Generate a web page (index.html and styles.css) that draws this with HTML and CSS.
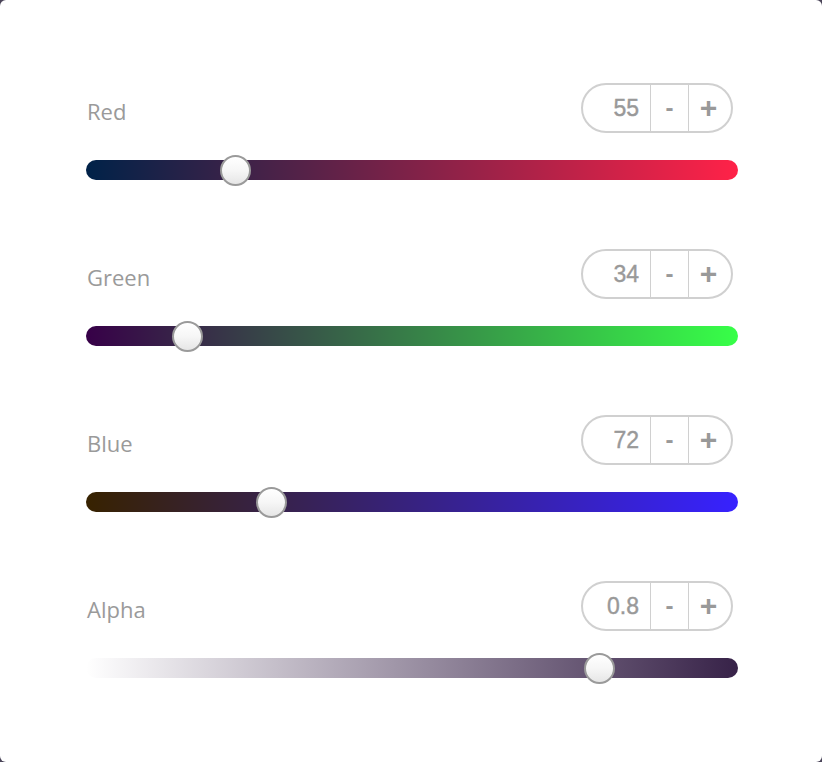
FILE: index.html
```html
<!DOCTYPE html>
<html>
<head>
<meta charset="utf-8">
<link rel="stylesheet" href="styles.css">
</head>
<body>
<div class="card">
  <div class="row">
    <div class="head">
      <span class="label">Red</span>
      <div class="stepper"><span class="val">55</span><span class="btn minus">-</span><span class="btn plus">+</span></div>
    </div>
    <div class="track red"><span class="thumb" style="left:149px"></span></div>
  </div>
  <div class="row">
    <div class="head">
      <span class="label">Green</span>
      <div class="stepper"><span class="val">34</span><span class="btn minus">-</span><span class="btn plus">+</span></div>
    </div>
    <div class="track green"><span class="thumb" style="left:101px"></span></div>
  </div>
  <div class="row">
    <div class="head">
      <span class="label">Blue</span>
      <div class="stepper"><span class="val">72</span><span class="btn minus">-</span><span class="btn plus">+</span></div>
    </div>
    <div class="track blue"><span class="thumb" style="left:185px"></span></div>
  </div>
  <div class="row">
    <div class="head">
      <span class="label">Alpha</span>
      <div class="stepper"><span class="val">0.8</span><span class="btn minus">-</span><span class="btn plus">+</span></div>
    </div>
    <div class="track alpha"><span class="thumb" style="left:513px"></span></div>
  </div>
</div>
</body>
</html>
```
FILE: styles.css
```css
html { background: #4a4458; }
body { margin: 0; }
.card {
  width: 822px;
  height: 762px;
  box-sizing: border-box;
  background: #fff;
  border-radius: 6px;
  padding: 83px 84px 0 86px;
  display: flex;
  flex-direction: column;
  gap: 69px;
}
.row { display: flex; flex-direction: column; gap: 27px; }
.head {
  display: flex;
  justify-content: space-between;
  align-items: center;
  padding-right: 5px;
}
.label {
  font-family: "Open Sans", sans-serif;
  font-size: 22px;
  color: #9a9a9a;
  padding-top: 6px;
  padding-left: 1px;
}
.stepper {
  display: flex;
  height: 50px;
  width: 152px;
  box-sizing: border-box;
  border: 2px solid #d0d0d0;
  border-radius: 25px;
  font-family: "Liberation Sans", Arial, sans-serif;
  color: #999;
}
.val {
  width: 68px;
  box-sizing: border-box;
  padding-right: 11px;
  text-align: right;
  font-size: 23px;
  line-height: 46px;
  -webkit-text-stroke: 0.4px #999;
  border-right: 1.5px solid #d0d0d0;
}
.btn {
  text-align: center;
  line-height: 45px;
  font-size: 24px;
  font-weight: bold;
}
.minus { width: 37px; border-right: 1.5px solid #d0d0d0; }
.plus { flex: 1; font-size: 30px; padding-right: 3px; }
.track {
  position: relative;
  height: 20px;
  border-radius: 10px;
}
.red { background: linear-gradient(to right, rgb(0,34,72), rgb(255,34,72)); }
.green { background: linear-gradient(to right, rgb(55,0,72), rgb(55,255,72)); }
.blue { background: linear-gradient(to right, rgb(55,34,0), rgb(55,34,255)); }
.alpha { background: linear-gradient(to right, rgba(55,34,72,0), rgba(55,34,72,1)); }
.thumb {
  position: absolute;
  top: 50%;
  width: 31px;
  height: 31px;
  margin-left: -15.5px;
  margin-top: -15.5px;
  box-sizing: border-box;
  border-radius: 50%;
  border: 2px solid #9a9a9a;
  background: linear-gradient(to bottom, #ffffff 0%, #f6f6f6 50%, #e6e6e6 100%);
}
```
